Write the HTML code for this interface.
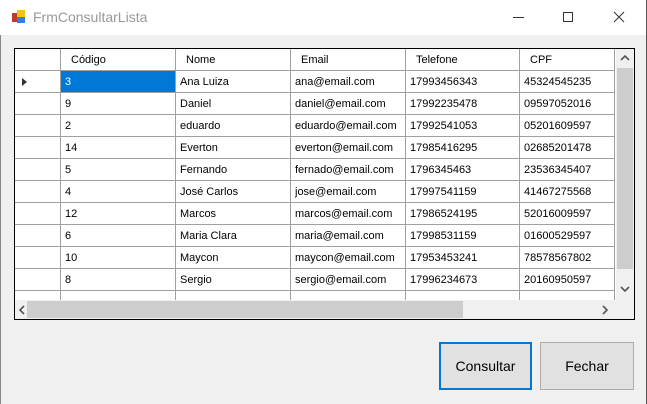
<!DOCTYPE html><html><head><style>
*{margin:0;padding:0;box-sizing:border-box}
body{width:647px;height:404px;background:#f0f0f0;font-family:"Liberation Sans",sans-serif;position:relative;overflow:hidden}
.t{position:absolute;left:0;top:0;width:647px;height:35px;background:#fff}
.ttl{position:absolute;left:33px;top:9px;font-size:14px;color:#999}
.grid{position:absolute;left:14px;top:48px;width:621px;height:272px;border:1px solid #000;background:#fff;overflow:hidden}
.c{position:absolute;font-size:11px;color:#000;border-right:1px solid #a0a0a0;border-bottom:1px solid #a0a0a0;padding-left:4px;line-height:22px;white-space:nowrap;overflow:hidden}
.sel{background:#0078d7;color:#fff}
.btn{position:absolute;background:#e1e1e1;border:1px solid #adadad;font-size:14px;text-align:center;color:#000}
</style></head><body>
<div class="t">
<svg style="position:absolute;left:11px;top:9px" width="16" height="16"><rect x="1" y="4" width="6" height="9" fill="#c0392b"/><rect x="6" y="1" width="8" height="7" fill="#f1c40f"/><rect x="6" y="8" width="8" height="6" fill="#3b7dd8"/></svg>
<div class="ttl">FrmConsultarLista</div>
<div style="position:absolute;left:513px;top:17px;width:11px;height:1px;background:#333"></div>
<div style="position:absolute;left:563px;top:12px;width:10px;height:10px;border:1px solid #333"></div>
<svg style="position:absolute;left:613px;top:11px" width="12" height="12"><path d="M1 1L11 11M11 1L1 11" stroke="#333" stroke-width="1"/></svg>
</div>
<div style="position:absolute;left:0;top:35px;width:1px;height:369px;background:#888"></div>
<div style="position:absolute;right:0;top:0;width:1px;height:404px;background:#555"></div>
<div class="grid" id="g"></div>
<div class="btn" style="left:439px;top:342px;width:93px;height:48px;border:2px solid #0078d7;line-height:44px">Consultar</div>
<div class="btn" style="left:540px;top:342px;width:94px;height:48px;line-height:46px">Fechar</div>
<script>
var g=document.getElementById('g'),h='';
var xs=[0,46,161,276,391,505,600],hd=['','Código','Nome','Email','Telefone','CPF'];
var rows=[['3','Ana Luiza','ana@email.com','17993456343','45324545235'],['9','Daniel','daniel@email.com','17992235478','09597052016'],['2','eduardo','eduardo@email.com','17992541053','05201609597'],['14','Everton','everton@email.com','17985416295','02685201478'],['5','Fernando','fernado@email.com','1796345463','23536345407'],['4','José Carlos','jose@email.com','17997541159','41467275568'],['12','Marcos','marcos@email.com','17986524195','52016009597'],['6','Maria Clara','maria@email.com','17998531159','01600529597'],['10','Maycon','maycon@email.com','17953453241','78578567802'],['8','Sergio','sergio@email.com','17996234673','20160950597'],['','','','','']];
for(var i=0;i<6;i++)h+='<div class="c" style="left:'+xs[i]+'px;top:0;width:'+(xs[i+1]-xs[i])+'px;height:22px;padding-left:'+(i?10:4)+'px">'+hd[i]+'</div>';
rows.forEach(function(r,j){var y=22+22*j;h+='<div class="c" style="left:0;top:'+y+'px;width:46px;height:22px">'+(j==0?'<span style="position:absolute;left:7px;top:7px;border-left:5px solid #333;border-top:4px solid transparent;border-bottom:4px solid transparent"></span>':'')+'</div>';
for(var i=1;i<6;i++)h+='<div class="c'+(j==0&&i==1?' sel':'')+'" style="left:'+xs[i]+'px;top:'+y+'px;width:'+(xs[i+1]-xs[i])+'px;height:22px">'+r[i-1]+'</div>';});
h+='<div style="position:absolute;left:601px;top:0;width:18px;height:251px;background:#f0f0f0"><div style="position:absolute;left:1px;top:19px;width:16px;height:201px;background:#cdcdcd"></div><svg style="position:absolute;left:4px;top:6px" width="10" height="6"><path d="M1 5L5 1L9 5" stroke="#555" stroke-width="1.6" fill="none"/></svg><svg style="position:absolute;left:4px;top:237px" width="10" height="6"><path d="M1 1L5 5L9 1" stroke="#555" stroke-width="1.6" fill="none"/></svg></div>';
h+='<div style="position:absolute;left:0;top:251px;width:619px;height:19px;background:#f0f0f0"><div style="position:absolute;left:12px;top:1px;width:436px;height:17px;background:#cdcdcd"></div><svg style="position:absolute;left:4px;top:5px" width="6" height="10"><path d="M5 1L1 5L5 9" stroke="#555" stroke-width="1.6" fill="none"/></svg><svg style="position:absolute;left:587px;top:5px" width="6" height="10"><path d="M1 1L5 5L1 9" stroke="#555" stroke-width="1.6" fill="none"/></svg></div>';
g.innerHTML=h;
</script>
</body></html>
